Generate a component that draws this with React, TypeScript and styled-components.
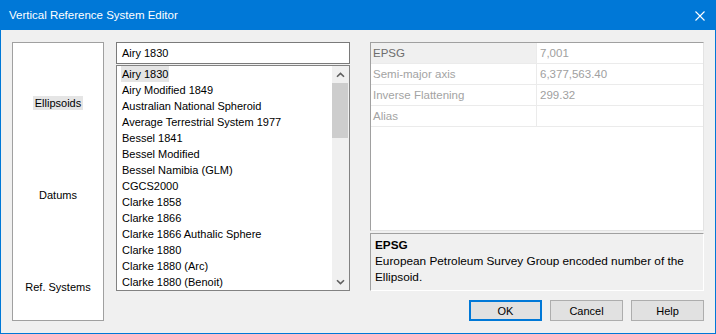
import styled, { createGlobalStyle } from 'styled-components';

const ellipsoids = [
  'Airy 1830',
  'Airy Modified 1849',
  'Australian National Spheroid',
  'Average Terrestrial System 1977',
  'Bessel 1841',
  'Bessel Modified',
  'Bessel Namibia (GLM)',
  'CGCS2000',
  'Clarke 1858',
  'Clarke 1866',
  'Clarke 1866 Authalic Sphere',
  'Clarke 1880',
  'Clarke 1880 (Arc)',
  'Clarke 1880 (Benoit)',
];

const properties = [
  { name: 'EPSG', value: '7,001', selected: true },
  { name: 'Semi-major axis', value: '6,377,563.40' },
  { name: 'Inverse Flattening', value: '299.32' },
  { name: 'Alias', value: '' },
];

const sections = [
  { label: 'Ellipsoids', active: true },
  { label: 'Datums' },
  { label: 'Ref. Systems' },
];

function Chevron({ down }: { down?: boolean }) {
  return (
    <svg width="9" height="6" viewBox="0 0 9 6">
      <path
        d={down ? 'M1 1.2 L4.5 4.6 L8 1.2' : 'M1 4.8 L4.5 1.4 L8 4.8'}
        fill="none"
        stroke="#606060"
        strokeWidth="1.6"
      />
    </svg>
  );
}

export default function App() {
  return (
    <>
      <GlobalStyle />
      <Window>
        <TitleBar>
          <Title>Vertical Reference System Editor</Title>
          <CloseIcon width="10" height="10" viewBox="0 0 10 10">
            <path d="M0.5 0.5 L9.5 9.5 M9.5 0.5 L0.5 9.5" stroke="#fff" strokeWidth="1.1" />
          </CloseIcon>
        </TitleBar>
        <Body>
          <Nav>
            {sections.map((s) => (
              <NavItem key={s.label}>
                <NavLabel $active={s.active}>{s.label}</NavLabel>
              </NavItem>
            ))}
          </Nav>
          <Middle>
            <SearchBox>Airy 1830</SearchBox>
            <ListBox>
              <Items>
                {ellipsoids.map((e, i) => (
                  <Item key={e}>
                    <ItemText $selected={i === 0}>{e}</ItemText>
                  </Item>
                ))}
              </Items>
              <ScrollBar>
                <ArrowButton>
                  <Chevron />
                </ArrowButton>
                <Thumb />
                <Track />
                <ArrowButton>
                  <Chevron down />
                </ArrowButton>
              </ScrollBar>
            </ListBox>
          </Middle>
          <RightColumn>
            <PropertyArea>
              <PropertyGrid>
                {properties.map((p) => (
                  <PropRow key={p.name}>
                    <PropName $selected={p.selected}>{p.name}</PropName>
                    <PropValue>{p.value}</PropValue>
                  </PropRow>
                ))}
              </PropertyGrid>
              <Description>
                <DescTitle>EPSG</DescTitle>
                <DescText>European Petroleum Survey Group encoded number of the Ellipsoid.</DescText>
              </Description>
            </PropertyArea>
            <ButtonRow>
              <Button $default>OK</Button>
              <Button>Cancel</Button>
              <Button>Help</Button>
            </ButtonRow>
          </RightColumn>
        </Body>
      </Window>
    </>
  );
}

const GlobalStyle = createGlobalStyle`
  html, body {
    margin: 0;
    padding: 0;
    background: #f0f0f0;
  }
  body {
    font-family: "Liberation Sans", Arial, sans-serif;
    font-size: 11px;
    color: #000;
  }
  * {
    box-sizing: border-box;
  }
`;

const Window = styled.div`
  width: 716px;
  height: 334px;
  border: 1px solid #0078d7;
  display: flex;
  flex-direction: column;
  background: #f0f0f0;
`;

const TitleBar = styled.div`
  height: 29px;
  background: #0078d7;
  display: flex;
  align-items: center;
  justify-content: space-between;
  padding-left: 8px;
  padding-right: 10px;
`;

const Title = styled.div`
  color: #fff;
  font-size: 11.5px;
  margin-top: -1px;
`;

const CloseIcon = styled.svg`
  display: block;
`;

const Body = styled.div`
  flex: 1;
  display: flex;
  gap: 12px;
  padding: 12px 11px 12px 11px;
`;

const Nav = styled.div`
  width: 92px;
  background: #fff;
  border: 1px solid #a0a0a0;
  display: grid;
  grid-template-rows: repeat(3, 1fr);
`;

const NavItem = styled.div`
  display: flex;
  align-items: center;
  justify-content: center;
  padding-top: 27px;
`;

const NavLabel = styled.span<{ $active?: boolean }>`
  line-height: 14px;
  padding: 0 2px;
  background: ${(p) => (p.$active ? '#e5e5e5' : 'transparent')};
`;

const Middle = styled.div`
  width: 234px;
  display: flex;
  flex-direction: column;
  gap: 1px;
  align-self: flex-start;
`;

const SearchBox = styled.div`
  height: 22px;
  background: #fff;
  border: 1px solid #7a7a7a;
  padding-left: 5px;
  line-height: 20px;
`;

const ListBox = styled.div`
  height: 226px;
  background: #fff;
  border: 1px solid #828282;
  display: flex;
`;

const Items = styled.div`
  flex: 1;
  overflow: hidden;
  padding-left: 4px;
`;

const Item = styled.div`
  height: 16px;
  white-space: nowrap;
`;

const ItemText = styled.span<{ $selected?: boolean }>`
  display: inline-block;
  line-height: 16px;
  padding: 0 1px;
  background: ${(p) => (p.$selected ? '#e5e5e5' : 'transparent')};
`;

const ScrollBar = styled.div`
  width: 17px;
  background: #f0f0f0;
  display: flex;
  flex-direction: column;
`;

const ArrowButton = styled.div`
  height: 17px;
  display: flex;
  align-items: center;
  justify-content: center;
`;

const Thumb = styled.div`
  height: 55px;
  margin: 0 1px 0 0;
  background: #cdcdcd;
`;

const Track = styled.div`
  flex: 1;
`;

const RightColumn = styled.div`
  flex: 1;
  margin-left: 8px;
  display: flex;
  flex-direction: column;
`;

const PropertyArea = styled.div`
  height: 249px;
  display: flex;
  flex-direction: column;
  gap: 2px;
`;

const PropertyGrid = styled.div`
  flex: 1;
  background: #fff;
  border-top: 1px solid #a0a0a0;
  border-left: 1px solid #a0a0a0;
  border-right: 1px solid #e3e3e3;
  border-bottom: 1px solid #e3e3e3;
`;

const PropRow = styled.div`
  height: 21px;
  display: grid;
  grid-template-columns: 166px 1fr;
  border-bottom: 1px solid #ebebeb;
  font-size: 11.5px;
  line-height: 20px;
`;

const PropName = styled.div<{ $selected?: boolean }>`
  padding-left: 2px;
  border-right: 1px solid #ebebeb;
  color: ${(p) => (p.$selected ? '#6d6d6d' : '#a3a3a3')};
  background: ${(p) => (p.$selected ? '#f0f0f0' : '#fff')};
`;

const PropValue = styled.div`
  padding-left: 3px;
  color: #a0a0a0;
`;

const Description = styled.div`
  height: 58px;
  background: #f0f0f0;
  border-top: 1px solid #a0a0a0;
  border-left: 1px solid #a0a0a0;
  border-right: 1px solid #fff;
  border-bottom: 1px solid #fff;
  padding: 3px 4px;
  font-size: 11.8px;
  line-height: 16px;
`;

const DescTitle = styled.div`
  font-weight: bold;
`;

const DescText = styled.div``;

const ButtonRow = styled.div`
  margin-top: 9px;
  display: flex;
  justify-content: flex-end;
  gap: 8px;
`;

const Button = styled.div<{ $default?: boolean }>`
  width: 73px;
  height: 21px;
  display: flex;
  align-items: center;
  justify-content: center;
  background: #e1e1e1;
  border: ${(p) => (p.$default ? '2px solid #0078d7' : '1px solid #adadad')};
`;
